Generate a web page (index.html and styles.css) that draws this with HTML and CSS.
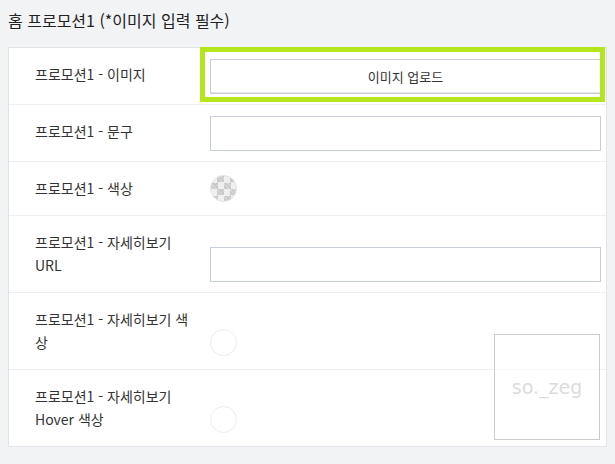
FILE: index.html
```html
<!DOCTYPE html>
<html lang="ko">
<head>
<meta charset="utf-8">
<link rel="stylesheet" href="styles.css">
</head>
<body>
<div class="page">
  <h1 class="title">홈 프로모션1 (*이미지 입력 필수)</h1>
  <div class="card">
    <div class="row">
      <div class="label">프로모션1 - 이미지</div>
      <div class="control"><button class="upload">이미지 업로드</button></div>
    </div>
    <div class="row">
      <div class="label">프로모션1 - 문구</div>
      <div class="control"><input class="field" type="text"></div>
    </div>
    <div class="row">
      <div class="label">프로모션1 - 색상</div>
      <div class="control swatch-cell"><span class="swatch checker"></span></div>
    </div>
    <div class="row">
      <div class="label">프로모션1 - 자세히보기 URL</div>
      <div class="control"><input class="field" type="text"></div>
    </div>
    <div class="row">
      <div class="label">프로모션1 - 자세히보기 색상</div>
      <div class="control swatch-cell"><span class="swatch"></span></div>
    </div>
    <div class="row">
      <div class="label">프로모션1 - 자세히보기 Hover 색상</div>
      <div class="control swatch-cell"><span class="swatch"></span></div>
    </div>
  </div>
  <div class="highlight"></div>
  <div class="watermark">so._zeg</div>
</div>
</body>
</html>
```
FILE: styles.css
```css
* { box-sizing: border-box; }
html, body { margin: 0; padding: 0; }
body {
  background: #f2f3f5;
  font-family: "Noto Sans CJK KR", "Noto Sans", sans-serif;
  color: #333;
  width: 615px;
  height: 464px;
  overflow: hidden;
}
.page {
  position: relative;
  padding: 8px 8px 0 8px;
}
.title {
  margin: 0 0 15px 0;
  font-size: 16px;
  line-height: 24px;
  font-weight: 400;
  color: #222;
}
.card {
  background: #fff;
  border: 1px solid #e1e4e8;
}
.row {
  display: grid;
  grid-template-columns: 201px 1fr;
  border-top: 1px solid #eeeff1;
}
.row:first-child { border-top: none; }
.label {
  padding: 15px 12px 15px 26px;
  font-size: 14px;
  line-height: 23px;
  color: #333;
}
.control {
  align-self: end;
  padding: 11px 5px 10px 0;
  display: flex;
}
.swatch-cell {
  padding-bottom: 13px;
}
.upload, .field {
  width: 100%;
  height: 35px;
  border: 1px solid #c8ced8;
  background: #fff;
  border-radius: 0;
  margin: 0;
}
.upload {
  font-family: "Noto Sans CJK KR", "Noto Sans", sans-serif;
  font-size: 13px;
  color: #333;
  box-shadow: inset 0 -1px 0 #e2e5ea;
}
.swatch {
  display: block;
  width: 27px;
  height: 27px;
  border-radius: 50%;
  border: 1px solid #ececec;
  background: #fff;
}
.checker {
  border-color: #e4e4e4;
  background-color: #eeeeee;
  background-image:
    repeating-linear-gradient(45deg, rgba(255,255,255,0.25) 0 1px, transparent 1px 3px),
    conic-gradient(#c9c9c9 25%, #eeeeee 0 50%, #c9c9c9 0 75%, #eeeeee 0);
  background-size: auto, 13px 13px;
  background-position: 0 0, 0 0;
}
.highlight {
  position: absolute;
  left: 200px;
  top: 47px;
  width: 405px;
  height: 55px;
  border: 5px solid #b5e51d;
}
.watermark {
  position: absolute;
  left: 494px;
  top: 334px;
  width: 106px;
  height: 106px;
  border: 1px solid #cbcbcb;
  background: rgba(255, 255, 255, 0.55);
  display: flex;
  align-items: center;
  justify-content: center;
  font-family: "DejaVu Sans", sans-serif;
  font-size: 19px;
  color: #dcdcdc;
}
```
